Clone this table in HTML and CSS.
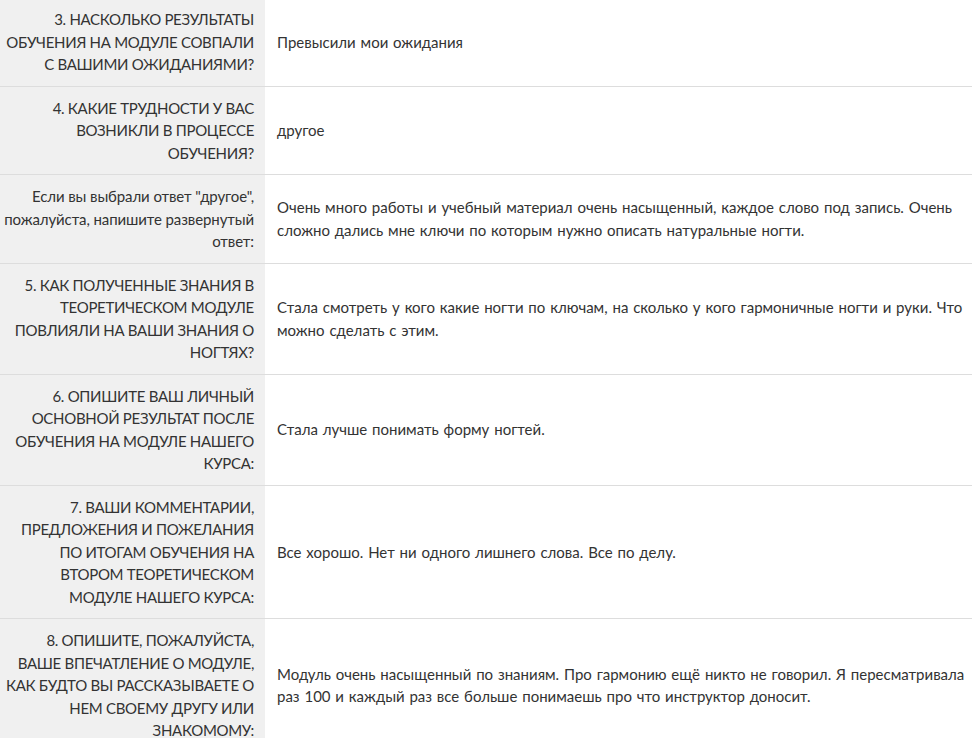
FILE: index.html
```html
<!DOCTYPE html>
<html lang="ru">
<head>
    <meta charset="UTF-8">
    <meta name="viewport" content="width=device-width, initial-scale=1.0">
    <title>Ответы анкеты</title>
    <link rel="stylesheet" href="styles.css">
</head>
<body>
    <table class="answers">
        <colgroup>
            <col class="q-col">
            <col>
        </colgroup>
        <tr>
            <th>3. НАСКОЛЬКО РЕЗУЛЬТАТЫ<br>ОБУЧЕНИЯ НА МОДУЛЕ СОВПАЛИ<br>С ВАШИМИ ОЖИДАНИЯМИ?</th>
            <td>Превысили мои ожидания</td>
        </tr>
        <tr>
            <th>4. КАКИЕ ТРУДНОСТИ У ВАС<br>ВОЗНИКЛИ В ПРОЦЕССЕ<br>ОБУЧЕНИЯ?</th>
            <td>другое</td>
        </tr>
        <tr>
            <th class="note">Если вы выбрали ответ "другое",<br>пожалуйста, напишите развернутый<br>ответ:</th>
            <td>Очень много работы и учебный материал очень насыщенный, каждое слово под запись. Очень<br>сложно дались мне ключи по которым нужно описать натуральные ногти.</td>
        </tr>
        <tr>
            <th>5. КАК ПОЛУЧЕННЫЕ ЗНАНИЯ В<br>ТЕОРЕТИЧЕСКОМ МОДУЛЕ<br>ПОВЛИЯЛИ НА ВАШИ ЗНАНИЯ О<br>НОГТЯХ?</th>
            <td>Стала смотреть у кого какие ногти по ключам, на сколько у кого гармоничные ногти и руки. Что<br>можно сделать с этим.</td>
        </tr>
        <tr>
            <th>6. ОПИШИТЕ ВАШ ЛИЧНЫЙ<br>ОСНОВНОЙ РЕЗУЛЬТАТ ПОСЛЕ<br>ОБУЧЕНИЯ НА МОДУЛЕ НАШЕГО<br>КУРСА:</th>
            <td>Стала лучше понимать форму ногтей.</td>
        </tr>
        <tr>
            <th>7. ВАШИ КОММЕНТАРИИ,<br>ПРЕДЛОЖЕНИЯ И ПОЖЕЛАНИЯ<br>ПО ИТОГАМ ОБУЧЕНИЯ НА<br>ВТОРОМ ТЕОРЕТИЧЕСКОМ<br>МОДУЛЕ НАШЕГО КУРСА:</th>
            <td>Все хорошо. Нет ни одного лишнего слова. Все по делу.</td>
        </tr>
        <tr>
            <th>8. ОПИШИТЕ, ПОЖАЛУЙСТА,<br>ВАШЕ ВПЕЧАТЛЕНИЕ О МОДУЛЕ,<br>КАК БУДТО ВЫ РАССКАЗЫВАЕТЕ О<br>НЕМ СВОЕМУ ДРУГУ ИЛИ<br>ЗНАКОМОМУ:</th>
            <td>Модуль очень насыщенный по знаниям. Про гармонию ещё никто не говорил. Я пересматривала<br>раз 100 и каждый раз все больше понимаешь про что инструктор доносит.</td>
        </tr>
    </table>
</body>
</html>
```

FILE: styles.css
```css
body {
    font-family: Lato, "Liberation Sans", Arial, sans-serif;
    background-color: #fff;
    color: #333;
    margin: 0;
    padding: 0;
}
.answers {
    width: 972px;
    margin-top: -2px;
    border-collapse: collapse;
    table-layout: fixed;
    font-size: 15px;
    line-height: 1.5;
}
.q-col {
    width: 265px;
}
.answers tr {
    border-bottom: 1px solid #ddd;
}
.answers th {
    padding: 10px 11px 10px 0;
    background-color: #f0f0f0;
    font-weight: normal;
    text-align: right;
    vertical-align: middle;
    white-space: nowrap;
    letter-spacing: -0.3px;
}
.answers th.note {
    letter-spacing: -0.1px;
}
.answers td {
    padding: 10px 0 10px 12px;
    text-align: left;
    vertical-align: middle;
    white-space: nowrap;
    word-spacing: 1px;
}
```
